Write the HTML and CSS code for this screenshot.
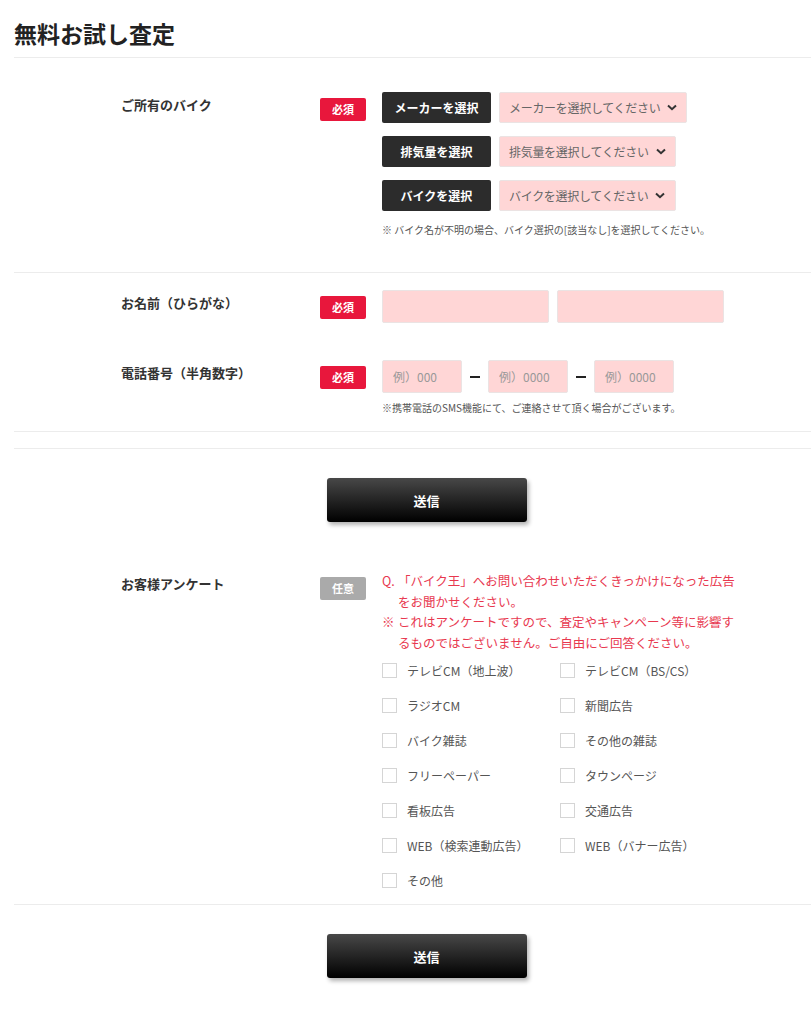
FILE: index.html
```html
<!DOCTYPE html>
<html lang="ja">
<head>
    <meta charset="UTF-8">
    <meta name="viewport" content="width=device-width, initial-scale=1.0">
    <title>無料お試し査定</title>
    <link rel="stylesheet" href="styles.css">
</head>
<body>
    <div class="page">
        <h1 class="page-title">無料お試し査定</h1>

        <!-- バイク情報 -->
        <div class="section bike-section">
            <div class="row">
                <div class="label">ご所有のバイク</div>
                <div class="badge-cell"><span class="badge required">必須</span></div>
                <div class="fields">
                    <div class="select-line">
                        <button class="pick-button">メーカーを選択</button>
                        <div class="fake-select wide">メーカーを選択してください <span class="chev"><svg width="10" height="7" viewBox="0 0 10 7"><path d="M1 1.5 L5 5.2 L9 1.5" fill="none" stroke="#333" stroke-width="2"/></svg></span></div>
                    </div>
                    <div class="select-line">
                        <button class="pick-button">排気量を選択</button>
                        <div class="fake-select">排気量を選択してください <span class="chev"><svg width="10" height="7" viewBox="0 0 10 7"><path d="M1 1.5 L5 5.2 L9 1.5" fill="none" stroke="#333" stroke-width="2"/></svg></span></div>
                    </div>
                    <div class="select-line">
                        <button class="pick-button">バイクを選択</button>
                        <div class="fake-select">バイクを選択してください <span class="chev"><svg width="10" height="7" viewBox="0 0 10 7"><path d="M1 1.5 L5 5.2 L9 1.5" fill="none" stroke="#333" stroke-width="2"/></svg></span></div>
                    </div>
                    <p class="note">※ バイク名が不明の場合、バイク選択の[該当なし]を選択してください。</p>
                </div>
            </div>
        </div>

        <!-- お客様情報 -->
        <div class="section person-section">
            <div class="row">
                <div class="label">お名前（ひらがな）</div>
                <div class="badge-cell"><span class="badge required">必須</span></div>
                <div class="fields name-fields">
                    <input type="text" class="text-input name-input">
                    <input type="text" class="text-input name-input">
                </div>
            </div>
            <div class="row phone-row">
                <div class="label">電話番号（半角数字）</div>
                <div class="badge-cell"><span class="badge required">必須</span></div>
                <div class="fields">
                    <div class="phone-fields">
                        <input type="text" class="text-input tel-input" placeholder="例）000">
                        <span class="dash"></span>
                        <input type="text" class="text-input tel-input" placeholder="例）0000">
                        <span class="dash"></span>
                        <input type="text" class="text-input tel-input" placeholder="例）0000">
                    </div>
                    <p class="note">※携帯電話のSMS機能にて、ご連絡させて頂く場合がございます。</p>
                </div>
            </div>
        </div>

        <div class="section spacer-section"></div>

        <div class="submit-area first-submit">
            <button class="submit-button">送信</button>
        </div>

        <!-- アンケート -->
        <div class="section survey-section">
            <div class="row">
                <div class="label">お客様アンケート</div>
                <div class="badge-cell"><span class="badge optional">任意</span></div>
                <div class="fields">
                    <p class="survey-text"><span class="mark">Q.</span>「バイク王」へお問い合わせいただくきっかけになった広告をお聞かせください。</p>
                    <p class="survey-text"><span class="mark">※</span>これはアンケートですので、査定やキャンペーン等に影響するものではございません。ご自由にご回答ください。</p>
                    <div class="check-grid">
                        <label class="check"><span class="box"></span>テレビCM（地上波）</label>
                        <label class="check"><span class="box"></span>テレビCM（BS/CS）</label>
                        <label class="check"><span class="box"></span>ラジオCM</label>
                        <label class="check"><span class="box"></span>新聞広告</label>
                        <label class="check"><span class="box"></span>バイク雑誌</label>
                        <label class="check"><span class="box"></span>その他の雑誌</label>
                        <label class="check"><span class="box"></span>フリーペーパー</label>
                        <label class="check"><span class="box"></span>タウンページ</label>
                        <label class="check"><span class="box"></span>看板広告</label>
                        <label class="check"><span class="box"></span>交通広告</label>
                        <label class="check"><span class="box"></span>WEB（検索連動広告）</label>
                        <label class="check"><span class="box"></span>WEB（バナー広告）</label>
                        <label class="check"><span class="box"></span>その他</label>
                    </div>
                </div>
            </div>
        </div>

        <div class="submit-area last-submit">
            <button class="submit-button">送信</button>
        </div>
    </div>
</body>
</html>
```

FILE: styles.css
```css
/* Base */
body {
    margin: 0;
    background: #fff;
    color: #333;
    font-family: "Noto Sans CJK JP", "Noto Sans", sans-serif;
}

.page {
    margin-left: 14px;
}

.page-title {
    margin: 0;
    height: 58px;
    box-sizing: border-box;
    padding-top: 17px;
    font-size: 23px;
    line-height: 32px;
    font-weight: bold;
    color: #222;
    border-bottom: 1px solid #ececec;
}

/* Sections */
.section {
    padding-left: 107px;
    border-bottom: 1px solid #ececec;
}

.bike-section {
    padding-top: 34px;
    padding-bottom: 34px;
}

.person-section {
    padding-top: 17px;
    padding-bottom: 15px;
}

.spacer-section {
    height: 16px;
}

.survey-section {
    border-bottom: 1px solid #ececec;
    padding-bottom: 14px;
}

.row {
    display: grid;
    grid-template-columns: 199px 62px 1fr;
    align-items: start;
}

.phone-row {
    margin-top: 37px;
}

.label {
    font-size: 13px;
    font-weight: bold;
    color: #333;
    line-height: 20px;
    padding-top: 3px;
}

.badge-cell {
    padding-top: 3px;
}

.badge {
    display: inline-block;
    width: 46px;
    height: 23px;
    line-height: 23px;
    text-align: center;
    font-size: 11px;
    font-weight: bold;
    color: #fff;
    border-radius: 2px;
}

.required {
    background-color: #e8173c;
}

.optional {
    background-color: #aaa;
}

/* Bike selects */
.select-line {
    display: flex;
    gap: 8px;
    margin-bottom: 13px;
}

.pick-button {
    width: 109px;
    height: 31px;
    background-color: #2c2c2c;
    color: #fff;
    border: none;
    border-radius: 2px;
    font-family: inherit;
    font-size: 12px;
    font-weight: bold;
    padding: 0;
}

.fake-select {
    width: 177px;
    height: 31px;
    box-sizing: border-box;
    display: flex;
    align-items: center;
    padding-left: 9px;
    background-color: #ffd6d6;
    border: 1px solid #ebe3e3;
    border-radius: 2px;
    font-size: 12px;
    letter-spacing: -0.3px;
    color: #666;
}

.fake-select.wide {
    width: 188px;
}

.chev {
    display: inline-flex;
    margin-left: 7px;
}

.note {
    margin: -2px 0 0;
    font-size: 10px;
    line-height: 16px;
    color: #555;
}

/* Text inputs */
.text-input {
    box-sizing: border-box;
    height: 33px;
    background-color: #ffd6d6;
    border: 1px solid #ebe3e3;
    border-radius: 2px;
    padding: 0 10px;
    font-family: inherit;
    font-size: 12px;
    color: #333;
    outline: none;
}

.text-input::placeholder {
    color: #999;
}

.name-fields {
    display: flex;
    gap: 8px;
}

.name-input {
    width: 167px;
}

.phone-fields {
    display: flex;
    align-items: center;
}

.tel-input {
    width: 80px;
}

.dash {
    width: 10px;
    height: 2px;
    margin: 0 8px;
    background-color: #222;
}

.phone-row .note {
    margin-top: 7px;
}

/* Submit */
.submit-area {
    display: flex;
    justify-content: center;
    padding-left: 28px;
}

.first-submit {
    padding-top: 29px;
    padding-bottom: 49px;
}

.last-submit {
    padding-top: 29px;
    padding-bottom: 40px;
}

.submit-button {
    width: 200px;
    height: 44px;
    border: none;
    border-radius: 3px;
    background: linear-gradient(#484848, #000);
    box-shadow: 2px 3px 4px rgba(0, 0, 0, 0.3);
    color: #fff;
    font-family: inherit;
    font-size: 13px;
    font-weight: bold;
}

/* Survey */
.survey-text {
    margin: 0;
    width: 346px;
    padding-left: 16px;
    text-indent: -16px;
    font-size: 12.5px;
    line-height: 20.5px;
    color: #e8384f;
}

.survey-text .mark {
    display: inline-block;
    width: 16px;
    text-indent: 0;
}

.check-grid {
    display: grid;
    grid-template-columns: 178px 178px;
    row-gap: 15px;
    margin-top: 7px;
}

.check {
    display: flex;
    align-items: center;
    height: 20px;
    font-size: 12px;
    color: #555;
}

.box {
    width: 13px;
    height: 13px;
    border: 1px solid #d5d5d5;
    margin-right: 10px;
    background: #fff;
}
```
